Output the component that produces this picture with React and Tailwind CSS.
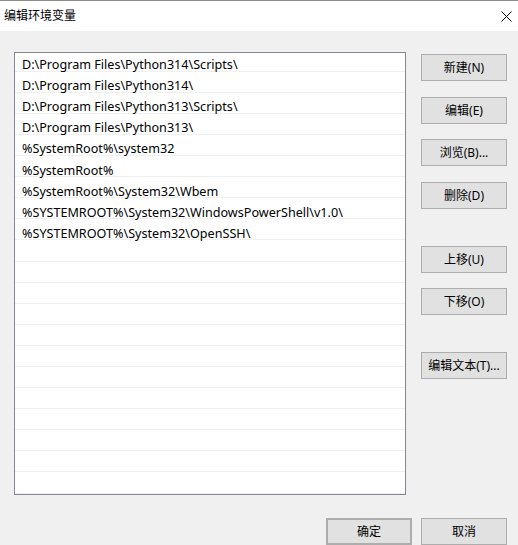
const paths = [
  "D:\\Program Files\\Python314\\Scripts\\",
  "D:\\Program Files\\Python314\\",
  "D:\\Program Files\\Python313\\Scripts\\",
  "D:\\Program Files\\Python313\\",
  "%SystemRoot%\\system32",
  "%SystemRoot%",
  "%SystemRoot%\\System32\\Wbem",
  "%SYSTEMROOT%\\System32\\WindowsPowerShell\\v1.0\\",
  "%SYSTEMROOT%\\System32\\OpenSSH\\",
];

const rows = [...paths, ...Array(13).fill("")];

const Btn = ({ children, className = "" }) => (
  <button
    className={`w-[86px] h-[27px] bg-[#e1e1e1] border border-[#adadad] text-[12px] text-black flex items-center justify-center leading-none ${className}`}
  >
    {children}
  </button>
);

export default function App() {
  return (
    <div
      className="w-[518px] h-[545px] bg-[#f0f0f0] overflow-hidden"
      style={{ fontFamily: '"Noto Sans", "Noto Sans CJK SC", sans-serif' }}
    >
      {/* title bar */}
      <div className="h-[31px] bg-white border-t border-[#8c8c8c] flex items-center justify-between pl-[4px] pr-[6px]">
        <span className="text-[12px] text-black leading-none">编辑环境变量</span>
        <svg width="11" height="11" viewBox="0 0 11 11" className="mt-[1px]">
          <path d="M0.5 0.5 L10.5 10.5 M10.5 0.5 L0.5 10.5" stroke="#000" strokeWidth="1" />
        </svg>
      </div>

      <div className="flex pl-[14px] pt-[21px]">
        {/* path list */}
        <div className="w-[392px] h-[443px] border border-[#828790] bg-white overflow-hidden">
          <div className="-mt-[2.4px]">
            {rows.map((p, i) => (
              <div
                key={i}
                className="h-[21.1px] border-b border-[#f0f0f0] pl-[7px] pt-[8.5px] text-[12.6px] leading-[12px] text-black whitespace-nowrap"
              >
                {p}
              </div>
            ))}
          </div>
        </div>

        {/* side buttons */}
        <div className="ml-[15px] pt-[2px] flex flex-col">
          <Btn>新建(N)</Btn>
          <Btn className="mt-[16px]">编辑(E)</Btn>
          <Btn className="mt-[15px]">浏览(B)...</Btn>
          <Btn className="mt-[16px]">删除(D)</Btn>
          <Btn className="mt-[37px]">上移(U)</Btn>
          <Btn className="mt-[15px]">下移(O)</Btn>
          <Btn className="mt-[37px]">编辑文本(T)...</Btn>
        </div>
      </div>

      {/* dialog buttons */}
      <div className="flex justify-end gap-[9px] pr-[11px] mt-[23px]">
        <Btn className="border-2 border-[#0078d7]">确定</Btn>
        <Btn>取消</Btn>
      </div>
    </div>
  );
}
